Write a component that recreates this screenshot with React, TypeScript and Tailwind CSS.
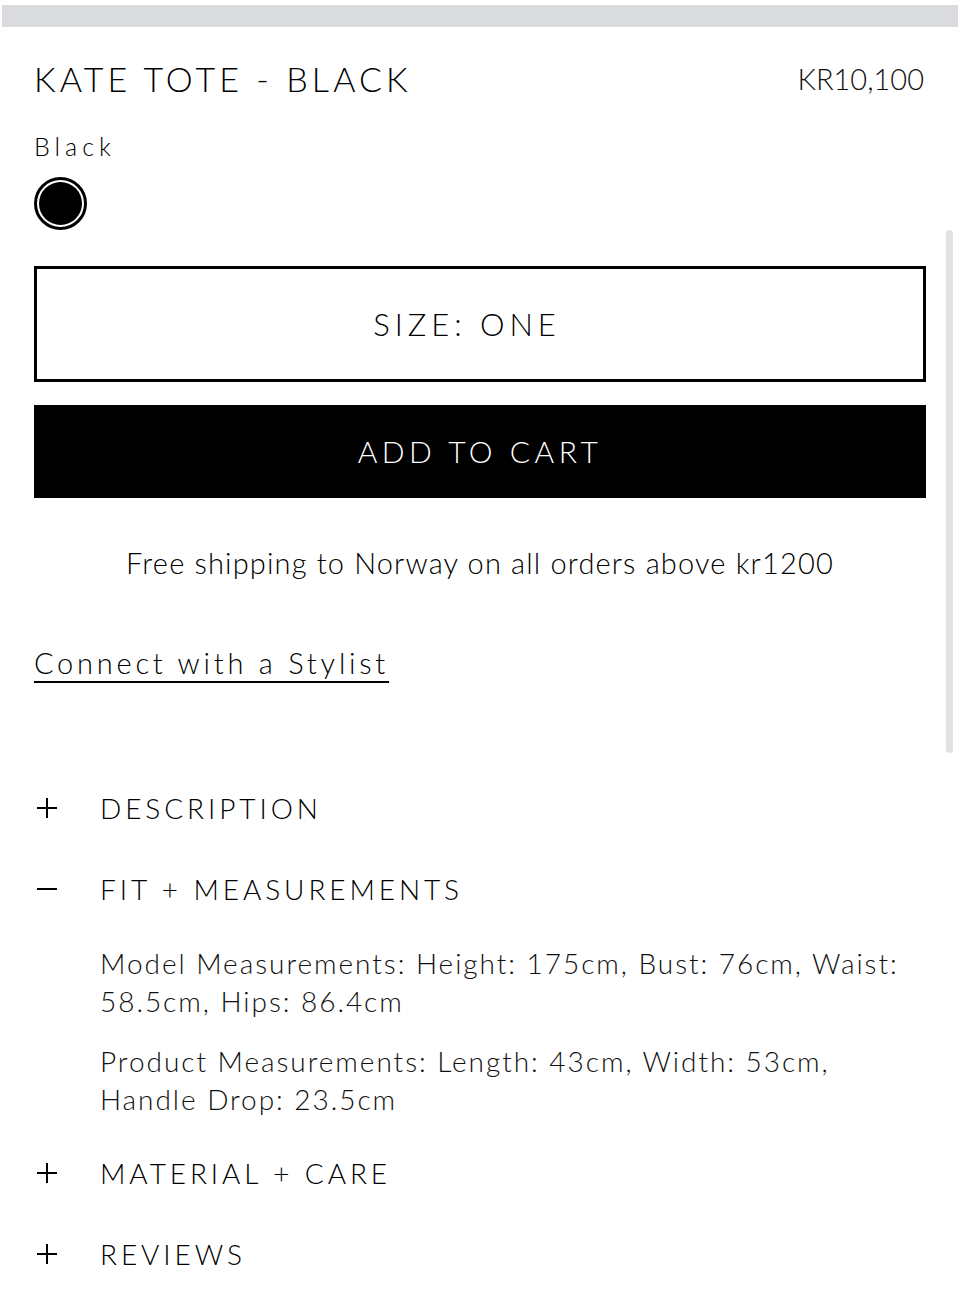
import React from "react";

const font = { fontFamily: "Lato, 'Open Sans', sans-serif" };

function PlusIcon({ open }: { open?: boolean }) {
  return (
    <svg width="22" height="22" viewBox="0 0 22 22" className="shrink-0">
      <line x1="1" y1="11" x2="21" y2="11" stroke="#000" strokeWidth="2" />
      {!open && <line x1="11" y1="1" x2="11" y2="21" stroke="#000" strokeWidth="2" />}
    </svg>
  );
}

function AccordionRow({ label, open }: { label: string; open?: boolean }) {
  return (
    <div className="flex items-center h-[36px]">
      <div className="w-[66px] pl-[2px] flex items-center">
        <PlusIcon open={open} />
      </div>
      <span className="text-[28px] leading-[36px] tracking-[0.14em]">{label}</span>
    </div>
  );
}

export default function App() {
  return (
    <div className="relative w-[960px] h-[1306px] bg-white overflow-hidden text-black font-light" style={font}>
      {/* image strip above the product info */}
      <div className="mx-[2px] mt-[5px] h-[22px] bg-[#d9dbde]" />

      {/* scrollbar overlay */}
      <div className="absolute left-[946px] top-[230px] w-[7px] h-[523px] rounded-full bg-[#e2e2e2]" />

      <div className="px-[34px]">
        <div className="mt-[32px] flex justify-between items-center h-[40px]">
          <h1 className="text-[34px] leading-[40px] tracking-[0.12em] font-light">KATE TOTE - BLACK</h1>
          <span className="text-[29px] leading-[40px] text-[#111] mr-[2px]">KR10,100</span>
        </div>

        <p className="mt-[31px] text-[25px] leading-[32px] tracking-[0.2em]">Black</p>

        <div className="mt-[15px] w-[53px] h-[53px] rounded-full border-[3px] border-black p-[2px]">
          <div className="w-full h-full rounded-full bg-black" />
        </div>

        <button className="mt-[36px] w-full h-[116px] border-[3px] border-black bg-white flex items-center justify-center pr-[26px] text-[31px] tracking-[0.16em] text-black font-light">
          SIZE: ONE
        </button>

        <button className="mt-[23px] w-full h-[93px] bg-black flex items-center justify-center text-[30px] tracking-[0.15em] text-white font-light">
          ADD TO CART
        </button>

        <p className="mt-[47px] text-center text-[29px] leading-[36px] tracking-[0.04em]">
          Free shipping to Norway on all orders above kr1200
        </p>

        <a className="mt-[64px] inline-block text-[29px] leading-[36px] tracking-[0.13em] underline underline-offset-[7px] decoration-[2px]">
          Connect with a Stylist
        </a>

        <div className="mt-[109px]">
          <AccordionRow label="DESCRIPTION" />
        </div>
        <div className="mt-[45px]">
          <AccordionRow label="FIT + MEASUREMENTS" open />
        </div>
        <div className="pl-[66px] pr-[10px] text-[28px] leading-[38px] tracking-[0.07em] text-[#111]">
          <p className="mt-[37px]">
            Model Measurements: Height: 175cm, Bust: 76cm, Waist: 58.5cm, Hips: 86.4cm
          </p>
          <p className="mt-[22px]">
            Product Measurements: Length: 43cm, Width: 53cm, Handle Drop: 23.5cm
          </p>
        </div>
        <div className="mt-[37px]">
          <AccordionRow label="MATERIAL + CARE" />
        </div>
        <div className="mt-[45px]">
          <AccordionRow label="REVIEWS" />
        </div>
      </div>
    </div>
  );
}
